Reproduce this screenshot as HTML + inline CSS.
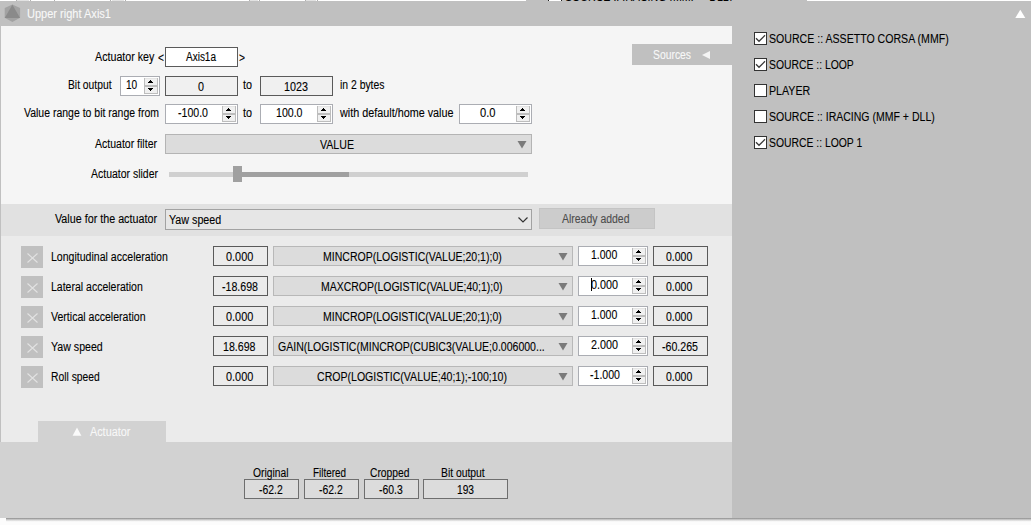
<!DOCTYPE html>
<html><head><meta charset="utf-8"><title>Upper right Axis1</title>
<style>
html,body{margin:0;padding:0;}
body{width:1031px;height:525px;overflow:hidden;background:#fcfcfc;position:relative;font-family:"Liberation Sans",sans-serif;font-size:12px;}
.b{position:absolute;box-sizing:content-box;display:block;}
.t{position:absolute;white-space:nowrap;font-size:12px;line-height:14px;transform-origin:0 0;display:block;-webkit-text-stroke:0.1px;}
</style></head><body>
<div class="b" style="left:0px;top:0px;width:1031px;height:1px;background:#ffffff;"></div>
<div class="b" style="left:526px;top:0px;width:281px;height:1px;background:#c0c0c0;"></div>
<div class="b" style="left:549px;top:0px;width:12px;height:1px;background:#ffffff;"></div>
<div class="b" style="left:17px;top:0px;width:12px;height:1px;background:#e2e2e2;"></div>
<div class="b" style="left:112px;top:0px;width:12px;height:1px;background:#e2e2e2;"></div>
<div class="b" style="left:250px;top:0px;width:8px;height:1px;background:#e2e2e2;"></div>
<div class="b" style="left:306px;top:0px;width:10px;height:1px;background:#e2e2e2;"></div>
<div class="b" style="left:16px;top:0px;width:1px;height:1px;background:#b0b0b0;"></div>
<div class="b" style="left:30px;top:0px;width:1px;height:1px;background:#b0b0b0;"></div>
<div class="b" style="left:54px;top:0px;width:1px;height:1px;background:#b0b0b0;"></div>
<div class="b" style="left:110px;top:0px;width:1px;height:1px;background:#b0b0b0;"></div>
<div class="b" style="left:125px;top:0px;width:1px;height:1px;background:#b0b0b0;"></div>
<div class="b" style="left:249px;top:0px;width:1px;height:1px;background:#b0b0b0;"></div>
<div class="b" style="left:259px;top:0px;width:1px;height:1px;background:#b0b0b0;"></div>
<div class="b" style="left:305px;top:0px;width:1px;height:1px;background:#b0b0b0;"></div>
<div class="b" style="left:317px;top:0px;width:1px;height:1px;background:#b0b0b0;"></div>
<div class="b" style="left:548px;top:0px;width:1px;height:1px;background:#222;"></div>
<div class="b" style="left:561px;top:0px;width:1px;height:1px;background:#222;"></div>
<div class="b" style="left:0px;top:1px;width:1031px;height:517px;background:#c0c0c0;"></div>
<div class="b" style="left:1px;top:26px;width:731px;height:178px;background:#f5f5f5;"></div>
<div class="b" style="left:1px;top:204px;width:731px;height:32px;background:#e1e1e1;"></div>
<div class="b" style="left:1px;top:236px;width:731px;height:206px;background:#ebebeb;"></div>
<div class="b" style="left:0px;top:442px;width:732px;height:76px;background:#d2d2d2;"></div>
<div class="b" style="left:6px;top:518px;width:1025px;height:4px;background:linear-gradient(#8c8c8c,#c8c8c8 40%,#f4f4f4 80%,#fdfdfd)"></div>
<div class="b" style="left:0;top:0;width:1031px;height:1px;overflow:hidden"><span class="t" style="left:565px;top:-10px;color:#000;transform:scaleX(0.885)">SOURCE :: IRACING (MMF + DLL)</span></div>
<svg class="b" style="left:4px;top:4px" width="17" height="19" viewBox="0 0 17 19"><polygon points="8.4,0.4 16.1,4 16.1,13.7 8.4,18 0.7,13.7 0.7,4" fill="#a2a2a2"/><polygon points="8.4,0.7 16.1,13.9 0.7,13.9" fill="#8a8a8a"/></svg>
<svg class="b" style="left:1015px;top:9px" width="11" height="10" viewBox="0 0 11 10"><polygon points="5.3,0.8 10.3,9 0.3,9" fill="#ffffff"/></svg>
<div class="b" style="left:632px;top:44px;width:100px;height:21px;background:#c0c0c0;"></div>
<svg class="b" style="left:701px;top:50px" width="10" height="10" viewBox="0 0 10 10"><polygon points="9,1 9,9 1,5" fill="#f4f4f4"/></svg>
<div class="b" style="left:38px;top:421px;width:128px;height:21px;background:#d2d2d2;"></div>
<svg class="b" style="left:72px;top:427px" width="10" height="10" viewBox="0 0 10 10"><polygon points="5,0.4 9.4,8.7 0.6,8.7" fill="#fafafa"/></svg>
<div class="b" style="left:165px;top:47px;width:71px;height:18px;background:#ffffff;border:1px solid #5a5a5a;"></div>
<div class="b" style="left:120px;top:76px;width:38px;height:18px;background:#ffffff;border:1px solid #abadb3;"></div>
<svg class="b" style="left:144px;top:78px" width="14" height="16" viewBox="0 0 14 16" shape-rendering="crispEdges"><rect x="0" y="0" width="14" height="16" fill="#bdbdbd"/><rect x="1" y="1" width="12" height="6" fill="#f0f0f0"/><rect x="1" y="9" width="12" height="6" fill="#f0f0f0"/><rect x="1" y="0" width="12" height="1" fill="#e4e4e4"/><rect x="6" y="2" width="1" height="1" fill="#000"/><rect x="5" y="3" width="3" height="1" fill="#000"/><rect x="4" y="4" width="5" height="1" fill="#000"/><rect x="4" y="10" width="5" height="1" fill="#000"/><rect x="5" y="11" width="3" height="1" fill="#000"/><rect x="6" y="12" width="1" height="1" fill="#000"/></svg>
<div class="b" style="left:165px;top:76px;width:71px;height:18px;background:#f0f0f0;border:1px solid #5a5a5a;"></div>
<div class="b" style="left:260px;top:76px;width:71px;height:18px;background:#f0f0f0;border:1px solid #5a5a5a;"></div>
<div class="b" style="left:165px;top:104px;width:71px;height:18px;background:#ffffff;border:1px solid #abadb3;"></div>
<svg class="b" style="left:222px;top:106px" width="14" height="16" viewBox="0 0 14 16" shape-rendering="crispEdges"><rect x="0" y="0" width="14" height="16" fill="#bdbdbd"/><rect x="1" y="1" width="12" height="6" fill="#f0f0f0"/><rect x="1" y="9" width="12" height="6" fill="#f0f0f0"/><rect x="1" y="0" width="12" height="1" fill="#e4e4e4"/><rect x="6" y="2" width="1" height="1" fill="#000"/><rect x="5" y="3" width="3" height="1" fill="#000"/><rect x="4" y="4" width="5" height="1" fill="#000"/><rect x="4" y="10" width="5" height="1" fill="#000"/><rect x="5" y="11" width="3" height="1" fill="#000"/><rect x="6" y="12" width="1" height="1" fill="#000"/></svg>
<div class="b" style="left:260px;top:104px;width:71px;height:18px;background:#ffffff;border:1px solid #abadb3;"></div>
<svg class="b" style="left:317px;top:106px" width="14" height="16" viewBox="0 0 14 16" shape-rendering="crispEdges"><rect x="0" y="0" width="14" height="16" fill="#bdbdbd"/><rect x="1" y="1" width="12" height="6" fill="#f0f0f0"/><rect x="1" y="9" width="12" height="6" fill="#f0f0f0"/><rect x="1" y="0" width="12" height="1" fill="#e4e4e4"/><rect x="6" y="2" width="1" height="1" fill="#000"/><rect x="5" y="3" width="3" height="1" fill="#000"/><rect x="4" y="4" width="5" height="1" fill="#000"/><rect x="4" y="10" width="5" height="1" fill="#000"/><rect x="5" y="11" width="3" height="1" fill="#000"/><rect x="6" y="12" width="1" height="1" fill="#000"/></svg>
<div class="b" style="left:459px;top:104px;width:71px;height:18px;background:#ffffff;border:1px solid #abadb3;"></div>
<svg class="b" style="left:516px;top:106px" width="14" height="16" viewBox="0 0 14 16" shape-rendering="crispEdges"><rect x="0" y="0" width="14" height="16" fill="#bdbdbd"/><rect x="1" y="1" width="12" height="6" fill="#f0f0f0"/><rect x="1" y="9" width="12" height="6" fill="#f0f0f0"/><rect x="1" y="0" width="12" height="1" fill="#e4e4e4"/><rect x="6" y="2" width="1" height="1" fill="#000"/><rect x="5" y="3" width="3" height="1" fill="#000"/><rect x="4" y="4" width="5" height="1" fill="#000"/><rect x="4" y="10" width="5" height="1" fill="#000"/><rect x="5" y="11" width="3" height="1" fill="#000"/><rect x="6" y="12" width="1" height="1" fill="#000"/></svg>
<div class="b" style="left:165px;top:134px;width:365px;height:18px;background:#dcdcdc;border:1px solid #b4b4b4;"></div>
<svg class="b" style="left:517px;top:141px" width="10" height="8" viewBox="0 0 10 8"><polygon points="0.5,0 9.5,0 5,7.5" fill="#7a7a7a"/></svg>
<div class="b" style="left:169px;top:172px;width:359px;height:5px;background:#d0d0d0;"></div>
<div class="b" style="left:242px;top:172px;width:107px;height:5px;background:#a0a0a0;"></div>
<div class="b" style="left:233px;top:166px;width:9px;height:16px;background:#a0a0a0;"></div>
<div class="b" style="left:165px;top:209px;width:365px;height:19px;background:#e6e6e6;border:1px solid #a2a2a2;"></div>
<svg class="b" style="left:517px;top:216px" width="12" height="8" viewBox="0 0 12 8"><polyline points="1.5,1.5 6,6 10.5,1.5" fill="none" stroke="#333" stroke-width="1.2"/></svg>
<div class="b" style="left:539px;top:208px;width:114px;height:19px;background:#cccccc;border:1px solid #c4c4c4;"></div>
<div class="b" style="left:21px;top:246px;width:22px;height:22px;background:#c0c0c0;"></div>
<svg class="b" style="left:27px;top:253px" width="11" height="10" viewBox="0 0 11 10"><path d="M0.5,0.5 L10.5,9.5 M10.5,0.5 L0.5,9.5" stroke="#e2e2e2" stroke-width="1.1" fill="none"/></svg>
<div class="b" style="left:213px;top:246px;width:53px;height:18px;background:#ebebeb;border:1px solid #5a5a5a;"></div>
<div class="b" style="left:273px;top:246px;width:298px;height:18px;background:#dcdcdc;border:1px solid #b8b8b8;"></div>
<svg class="b" style="left:558px;top:253px" width="10" height="8" viewBox="0 0 10 8"><polygon points="0.5,0 9.5,0 5,7.5" fill="#7a7a7a"/></svg>
<div class="b" style="left:578px;top:246px;width:68px;height:18px;background:#ffffff;border:1px solid #abadb3;"></div>
<svg class="b" style="left:632px;top:248px" width="14" height="16" viewBox="0 0 14 16" shape-rendering="crispEdges"><rect x="0" y="0" width="14" height="16" fill="#bdbdbd"/><rect x="1" y="1" width="12" height="6" fill="#f0f0f0"/><rect x="1" y="9" width="12" height="6" fill="#f0f0f0"/><rect x="1" y="0" width="12" height="1" fill="#e4e4e4"/><rect x="6" y="2" width="1" height="1" fill="#000"/><rect x="5" y="3" width="3" height="1" fill="#000"/><rect x="4" y="4" width="5" height="1" fill="#000"/><rect x="4" y="10" width="5" height="1" fill="#000"/><rect x="5" y="11" width="3" height="1" fill="#000"/><rect x="6" y="12" width="1" height="1" fill="#000"/></svg>
<div class="b" style="left:653px;top:246px;width:53px;height:18px;background:#ebebeb;border:1px solid #5a5a5a;"></div>
<div class="b" style="left:21px;top:276px;width:22px;height:22px;background:#c0c0c0;"></div>
<svg class="b" style="left:27px;top:283px" width="11" height="10" viewBox="0 0 11 10"><path d="M0.5,0.5 L10.5,9.5 M10.5,0.5 L0.5,9.5" stroke="#e2e2e2" stroke-width="1.1" fill="none"/></svg>
<div class="b" style="left:213px;top:276px;width:53px;height:18px;background:#ebebeb;border:1px solid #5a5a5a;"></div>
<div class="b" style="left:273px;top:276px;width:298px;height:18px;background:#dcdcdc;border:1px solid #b8b8b8;"></div>
<svg class="b" style="left:558px;top:283px" width="10" height="8" viewBox="0 0 10 8"><polygon points="0.5,0 9.5,0 5,7.5" fill="#7a7a7a"/></svg>
<div class="b" style="left:578px;top:276px;width:68px;height:18px;background:#ffffff;border:1px solid #abadb3;"></div>
<svg class="b" style="left:632px;top:278px" width="14" height="16" viewBox="0 0 14 16" shape-rendering="crispEdges"><rect x="0" y="0" width="14" height="16" fill="#bdbdbd"/><rect x="1" y="1" width="12" height="6" fill="#f0f0f0"/><rect x="1" y="9" width="12" height="6" fill="#f0f0f0"/><rect x="1" y="0" width="12" height="1" fill="#e4e4e4"/><rect x="6" y="2" width="1" height="1" fill="#000"/><rect x="5" y="3" width="3" height="1" fill="#000"/><rect x="4" y="4" width="5" height="1" fill="#000"/><rect x="4" y="10" width="5" height="1" fill="#000"/><rect x="5" y="11" width="3" height="1" fill="#000"/><rect x="6" y="12" width="1" height="1" fill="#000"/></svg>
<div class="b" style="left:653px;top:276px;width:53px;height:18px;background:#ebebeb;border:1px solid #5a5a5a;"></div>
<div class="b" style="left:21px;top:306px;width:22px;height:22px;background:#c0c0c0;"></div>
<svg class="b" style="left:27px;top:313px" width="11" height="10" viewBox="0 0 11 10"><path d="M0.5,0.5 L10.5,9.5 M10.5,0.5 L0.5,9.5" stroke="#e2e2e2" stroke-width="1.1" fill="none"/></svg>
<div class="b" style="left:213px;top:306px;width:53px;height:18px;background:#ebebeb;border:1px solid #5a5a5a;"></div>
<div class="b" style="left:273px;top:306px;width:298px;height:18px;background:#dcdcdc;border:1px solid #b8b8b8;"></div>
<svg class="b" style="left:558px;top:313px" width="10" height="8" viewBox="0 0 10 8"><polygon points="0.5,0 9.5,0 5,7.5" fill="#7a7a7a"/></svg>
<div class="b" style="left:578px;top:306px;width:68px;height:18px;background:#ffffff;border:1px solid #abadb3;"></div>
<svg class="b" style="left:632px;top:308px" width="14" height="16" viewBox="0 0 14 16" shape-rendering="crispEdges"><rect x="0" y="0" width="14" height="16" fill="#bdbdbd"/><rect x="1" y="1" width="12" height="6" fill="#f0f0f0"/><rect x="1" y="9" width="12" height="6" fill="#f0f0f0"/><rect x="1" y="0" width="12" height="1" fill="#e4e4e4"/><rect x="6" y="2" width="1" height="1" fill="#000"/><rect x="5" y="3" width="3" height="1" fill="#000"/><rect x="4" y="4" width="5" height="1" fill="#000"/><rect x="4" y="10" width="5" height="1" fill="#000"/><rect x="5" y="11" width="3" height="1" fill="#000"/><rect x="6" y="12" width="1" height="1" fill="#000"/></svg>
<div class="b" style="left:653px;top:306px;width:53px;height:18px;background:#ebebeb;border:1px solid #5a5a5a;"></div>
<div class="b" style="left:21px;top:336px;width:22px;height:22px;background:#c0c0c0;"></div>
<svg class="b" style="left:27px;top:343px" width="11" height="10" viewBox="0 0 11 10"><path d="M0.5,0.5 L10.5,9.5 M10.5,0.5 L0.5,9.5" stroke="#e2e2e2" stroke-width="1.1" fill="none"/></svg>
<div class="b" style="left:213px;top:336px;width:53px;height:18px;background:#ebebeb;border:1px solid #5a5a5a;"></div>
<div class="b" style="left:273px;top:336px;width:298px;height:18px;background:#dcdcdc;border:1px solid #b8b8b8;"></div>
<svg class="b" style="left:558px;top:343px" width="10" height="8" viewBox="0 0 10 8"><polygon points="0.5,0 9.5,0 5,7.5" fill="#7a7a7a"/></svg>
<div class="b" style="left:578px;top:336px;width:68px;height:18px;background:#ffffff;border:1px solid #abadb3;"></div>
<svg class="b" style="left:632px;top:338px" width="14" height="16" viewBox="0 0 14 16" shape-rendering="crispEdges"><rect x="0" y="0" width="14" height="16" fill="#bdbdbd"/><rect x="1" y="1" width="12" height="6" fill="#f0f0f0"/><rect x="1" y="9" width="12" height="6" fill="#f0f0f0"/><rect x="1" y="0" width="12" height="1" fill="#e4e4e4"/><rect x="6" y="2" width="1" height="1" fill="#000"/><rect x="5" y="3" width="3" height="1" fill="#000"/><rect x="4" y="4" width="5" height="1" fill="#000"/><rect x="4" y="10" width="5" height="1" fill="#000"/><rect x="5" y="11" width="3" height="1" fill="#000"/><rect x="6" y="12" width="1" height="1" fill="#000"/></svg>
<div class="b" style="left:653px;top:336px;width:53px;height:18px;background:#ebebeb;border:1px solid #5a5a5a;"></div>
<div class="b" style="left:21px;top:366px;width:22px;height:22px;background:#c0c0c0;"></div>
<svg class="b" style="left:27px;top:373px" width="11" height="10" viewBox="0 0 11 10"><path d="M0.5,0.5 L10.5,9.5 M10.5,0.5 L0.5,9.5" stroke="#e2e2e2" stroke-width="1.1" fill="none"/></svg>
<div class="b" style="left:213px;top:366px;width:53px;height:18px;background:#ebebeb;border:1px solid #5a5a5a;"></div>
<div class="b" style="left:273px;top:366px;width:298px;height:18px;background:#dcdcdc;border:1px solid #b8b8b8;"></div>
<svg class="b" style="left:558px;top:373px" width="10" height="8" viewBox="0 0 10 8"><polygon points="0.5,0 9.5,0 5,7.5" fill="#7a7a7a"/></svg>
<div class="b" style="left:578px;top:366px;width:68px;height:18px;background:#ffffff;border:1px solid #abadb3;"></div>
<svg class="b" style="left:632px;top:368px" width="14" height="16" viewBox="0 0 14 16" shape-rendering="crispEdges"><rect x="0" y="0" width="14" height="16" fill="#bdbdbd"/><rect x="1" y="1" width="12" height="6" fill="#f0f0f0"/><rect x="1" y="9" width="12" height="6" fill="#f0f0f0"/><rect x="1" y="0" width="12" height="1" fill="#e4e4e4"/><rect x="6" y="2" width="1" height="1" fill="#000"/><rect x="5" y="3" width="3" height="1" fill="#000"/><rect x="4" y="4" width="5" height="1" fill="#000"/><rect x="4" y="10" width="5" height="1" fill="#000"/><rect x="5" y="11" width="3" height="1" fill="#000"/><rect x="6" y="12" width="1" height="1" fill="#000"/></svg>
<div class="b" style="left:653px;top:366px;width:53px;height:18px;background:#ebebeb;border:1px solid #5a5a5a;"></div>
<div class="b" style="left:591px;top:278px;width:1px;height:13px;background:#000;"></div>
<div class="b" style="left:244px;top:479px;width:53px;height:18px;background:#dcdcdc;border:1px solid #6e6e6e;"></div>
<div class="b" style="left:304px;top:479px;width:53px;height:18px;background:#dcdcdc;border:1px solid #6e6e6e;"></div>
<div class="b" style="left:364px;top:479px;width:53px;height:18px;background:#dcdcdc;border:1px solid #6e6e6e;"></div>
<div class="b" style="left:423px;top:479px;width:83px;height:18px;background:#dcdcdc;border:1px solid #6e6e6e;"></div>
<div class="b" style="left:754px;top:32px;width:11px;height:11px;background:#ffffff;border:1px solid #333333;"></div>
<svg class="b" style="left:754px;top:32px" width="13" height="13" viewBox="0 0 13 13"><polyline points="2,6.3 5,9.3 11,3.3" fill="none" stroke="#3a3a3a" stroke-width="1.3"/></svg>
<div class="b" style="left:754px;top:58px;width:11px;height:11px;background:#ffffff;border:1px solid #333333;"></div>
<svg class="b" style="left:754px;top:58px" width="13" height="13" viewBox="0 0 13 13"><polyline points="2,6.3 5,9.3 11,3.3" fill="none" stroke="#3a3a3a" stroke-width="1.3"/></svg>
<div class="b" style="left:754px;top:84px;width:11px;height:11px;background:#ffffff;border:1px solid #333333;"></div>
<div class="b" style="left:754px;top:110px;width:11px;height:11px;background:#ffffff;border:1px solid #333333;"></div>
<div class="b" style="left:754px;top:136px;width:11px;height:11px;background:#ffffff;border:1px solid #333333;"></div>
<svg class="b" style="left:754px;top:136px" width="13" height="13" viewBox="0 0 13 13"><polyline points="2,6.3 5,9.3 11,3.3" fill="none" stroke="#3a3a3a" stroke-width="1.3"/></svg>
<span class="t" id="t0" style="left:27px;top:7px;color:#f8f8f8;transform:scaleX(0.9191)">Upper right Axis1</span>
<span class="t" id="t1" style="left:95px;top:50px;color:#000;transform:scaleX(0.8905)">Actuator key</span>
<span class="t" id="t2" style="left:158px;top:51px;color:#000;transform:scaleX(0.8552)">&lt;</span>
<span class="t" id="t3" style="left:239px;top:51px;color:#000;transform:scaleX(0.8552)">&gt;</span>
<span class="t" id="t4" style="left:185.6px;top:50px;color:#000;transform:scaleX(0.8326)">Axis1a</span>
<span class="t" id="t5" style="left:67.5px;top:78px;color:#000;transform:scaleX(0.8579)">Bit output</span>
<span class="t" id="t6" style="left:126.25px;top:78px;color:#000;transform:scaleX(0.8421)">10</span>
<span class="t" id="t7" style="left:198px;top:80px;color:#000;transform:scaleX(0.8972)">0</span>
<span class="t" id="t8" style="left:243px;top:78px;color:#000;transform:scaleX(0.8986)">to</span>
<span class="t" id="t9" style="left:284px;top:80px;color:#000;transform:scaleX(0.8988)">1023</span>
<span class="t" id="t10" style="left:339.5px;top:78px;color:#000;transform:scaleX(0.8662)">in 2 bytes</span>
<span class="t" id="t11" style="left:24px;top:106px;color:#000;transform:scaleX(0.8735)">Value range to bit range from</span>
<span class="t" id="t12" style="left:177.5px;top:106px;color:#000;transform:scaleX(0.8815)">-100.0</span>
<span class="t" id="t13" style="left:243px;top:106px;color:#000;transform:scaleX(0.8986)">to</span>
<span class="t" id="t14" style="left:275.5px;top:106px;color:#000;transform:scaleX(0.8824)">100.0</span>
<span class="t" id="t15" style="left:339.5px;top:106px;color:#000;transform:scaleX(0.9002)">with default/home value</span>
<span class="t" id="t16" style="left:479.5px;top:106px;color:#000;transform:scaleX(0.9288)">0.0</span>
<span class="t" id="t17" style="left:95px;top:137px;color:#000;transform:scaleX(0.8769)">Actuator filter</span>
<span class="t" id="t18" style="left:320px;top:138px;color:#000;transform:scaleX(0.8838)">VALUE</span>
<span class="t" id="t19" style="left:91px;top:167px;color:#000;transform:scaleX(0.8735)">Actuator slider</span>
<span class="t" id="t20" style="left:653px;top:48px;color:#f8f8f8;transform:scaleX(0.8630)">Sources</span>
<span class="t" id="t21" style="left:55px;top:212px;color:#000;transform:scaleX(0.8958)">Value for the actuator</span>
<span class="t" id="t22" style="left:169px;top:213px;color:#000;transform:scaleX(0.8934)">Yaw speed</span>
<span class="t" id="t23" style="left:562px;top:212px;color:#4c4c4c;transform:scaleX(0.8722)">Already added</span>
<span class="t" id="t24" style="left:51.25px;top:250px;color:#000;transform:scaleX(0.8794)">Longitudinal acceleration</span>
<span class="t" id="t25" style="left:225.75px;top:250px;color:#000;transform:scaleX(0.9074)">0.000</span>
<span class="t" id="t26" style="left:323px;top:250px;color:#000;transform:scaleX(0.8770)">MINCROP(LOGISTIC(VALUE;20;1);0)</span>
<span class="t" id="t27" style="left:591.25px;top:248px;color:#000;transform:scaleX(0.8741)">1.000</span>
<span class="t" id="t28" style="left:666.25px;top:250px;color:#000;transform:scaleX(0.8741)">0.000</span>
<span class="t" id="t29" style="left:51.25px;top:280px;color:#000;transform:scaleX(0.8760)">Lateral acceleration</span>
<span class="t" id="t30" style="left:222px;top:280px;color:#000;transform:scaleX(0.8845)">-18.698</span>
<span class="t" id="t31" style="left:321px;top:280px;color:#000;transform:scaleX(0.8733)">MAXCROP(LOGISTIC(VALUE;40;1);0)</span>
<span class="t" id="t32" style="left:590.5px;top:278px;color:#000;transform:scaleX(0.8991)">0.000</span>
<span class="t" id="t33" style="left:666.25px;top:280px;color:#000;transform:scaleX(0.8741)">0.000</span>
<span class="t" id="t34" style="left:51.25px;top:310px;color:#000;transform:scaleX(0.8800)">Vertical acceleration</span>
<span class="t" id="t35" style="left:225.75px;top:310px;color:#000;transform:scaleX(0.9074)">0.000</span>
<span class="t" id="t36" style="left:323px;top:310px;color:#000;transform:scaleX(0.8770)">MINCROP(LOGISTIC(VALUE;20;1);0)</span>
<span class="t" id="t37" style="left:591.25px;top:308px;color:#000;transform:scaleX(0.8741)">1.000</span>
<span class="t" id="t38" style="left:666.25px;top:310px;color:#000;transform:scaleX(0.8741)">0.000</span>
<span class="t" id="t39" style="left:51.25px;top:340px;color:#000;transform:scaleX(0.8849)">Yaw speed</span>
<span class="t" id="t40" style="left:223.25px;top:340px;color:#000;transform:scaleX(0.8855)">18.698</span>
<span class="t" id="t41" style="left:278.25px;top:340px;color:#000;transform:scaleX(0.8779)">GAIN(LOGISTIC(MINCROP(CUBIC3(VALUE;0.006000...</span>
<span class="t" id="t42" style="left:590.5px;top:338px;color:#000;transform:scaleX(0.8991)">2.000</span>
<span class="t" id="t43" style="left:662px;top:340px;color:#000;transform:scaleX(0.8845)">-60.265</span>
<span class="t" id="t44" style="left:51.25px;top:370px;color:#000;transform:scaleX(0.8597)">Roll speed</span>
<span class="t" id="t45" style="left:225.75px;top:370px;color:#000;transform:scaleX(0.9074)">0.000</span>
<span class="t" id="t46" style="left:317px;top:370px;color:#000;transform:scaleX(0.8802)">CROP(LOGISTIC(VALUE;40;1);-100;10)</span>
<span class="t" id="t47" style="left:590px;top:368px;color:#000;transform:scaleX(0.8815)">-1.000</span>
<span class="t" id="t48" style="left:666.25px;top:370px;color:#000;transform:scaleX(0.8741)">0.000</span>
<span class="t" id="t49" style="left:90px;top:425px;color:#f8f8f8;transform:scaleX(0.9015)">Actuator</span>
<span class="t" id="t50" style="left:253px;top:466px;color:#000;transform:scaleX(0.8583)">Original</span>
<span class="t" id="t51" style="left:313px;top:466px;color:#000;transform:scaleX(0.8247)">Filtered</span>
<span class="t" id="t52" style="left:370.25px;top:466px;color:#000;transform:scaleX(0.8581)">Cropped</span>
<span class="t" id="t53" style="left:441px;top:466px;color:#000;transform:scaleX(0.8629)">Bit output</span>
<span class="t" id="t54" style="left:259px;top:483px;color:#000;transform:scaleX(0.8681)">-62.2</span>
<span class="t" id="t55" style="left:319px;top:483px;color:#000;transform:scaleX(0.8681)">-62.2</span>
<span class="t" id="t56" style="left:379px;top:483px;color:#000;transform:scaleX(0.8681)">-60.3</span>
<span class="t" id="t57" style="left:456.5px;top:483px;color:#000;transform:scaleX(0.8487)">193</span>
<span class="t" id="t58" style="left:769.25px;top:32px;color:#000;transform:scaleX(0.8819)">SOURCE :: ASSETTO CORSA (MMF)</span>
<span class="t" id="t59" style="left:769.25px;top:58px;color:#000;transform:scaleX(0.8645)">SOURCE :: LOOP</span>
<span class="t" id="t60" style="left:769.25px;top:84px;color:#000;transform:scaleX(0.8877)">PLAYER</span>
<span class="t" id="t61" style="left:769.25px;top:110px;color:#000;transform:scaleX(0.8768)">SOURCE :: IRACING (MMF + DLL)</span>
<span class="t" id="t62" style="left:769.25px;top:136px;color:#000;transform:scaleX(0.8649)">SOURCE :: LOOP 1</span>
</body></html>
